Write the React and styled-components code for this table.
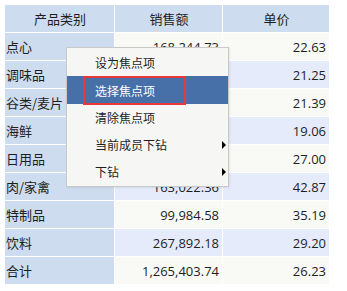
import React from "react";
import styled, { createGlobalStyle } from "styled-components";

const GlobalStyle = createGlobalStyle`
  body {
    margin: 0;
    background: #fff;
    font-family: "Segoe UI", "Noto Sans", "Noto Sans CJK SC", sans-serif;
  }
`;

const Page = styled.div`
  position: relative;
  padding: 5px;
`;

const Grid = styled.div`
  display: grid;
  grid-template-columns: 109px 107px 106px;
  grid-auto-rows: 27px;
  gap: 1px;
  width: max-content;
  background: #fff;
  color: #1e1e1e;
  font-size: 13px;
`;

const Cell = styled.div`
  display: flex;
  align-items: center;
  justify-content: ${p => (p.$head ? "center" : p.$num ? "flex-end" : "flex-start")};
  padding: ${p => (p.$num ? "0 3px 0 0" : "0 0 0 1px")};
  background: ${p =>
    p.$head || p.$label ? "#cddcef" : p.$alt ? "#e6ebfc" : "#f9f9f5"};
  font-family: ${p =>
    p.$num
      ? '"Segoe UI", "Open Sans", "Noto Sans", sans-serif'
      : '"Microsoft YaHei", "Noto Sans CJK SC", sans-serif'};
  white-space: nowrap;
`;

const Menu = styled.div`
  position: absolute;
  left: 66px;
  top: 47px;
  width: 161px;
  padding: 1px 0;
  background: #f6f6f4;
  border: 1px solid #c9c9c9;
  box-shadow: 1px 1px 2px rgba(0, 0, 0, 0.08);
  font-family: "Microsoft YaHei", "Noto Sans CJK SC", sans-serif;
  font-size: 12px;
`;

const MenuItem = styled.div`
  position: relative;
  display: flex;
  align-items: center;
  height: ${p => (p.$active ? 28 : 27)}px;
  padding-left: 28px;
  color: ${p => (p.$active ? "#fff" : "#1e1e1e")};
  background: ${p => (p.$active ? "#4870a8" : "transparent")};
`;

const Arrow = styled.span`
  position: absolute;
  right: 2px;
  top: 50%;
  margin-top: -4px;
  width: 0;
  height: 0;
  border-top: 4px solid transparent;
  border-bottom: 4px solid transparent;
  border-left: 4px solid #000;
`;

const Highlight = styled.div`
  position: absolute;
  left: 16px;
  top: 0;
  width: 103px;
  height: 29px;
  box-sizing: border-box;
  border: 2px solid #e8383b;
`;

const rows = [
  ["点心", "168,244.73", "22.63"],
  ["调味品", "106,047.08", "21.25"],
  ["谷类/麦片", "95,744.59", "21.39"],
  ["海鲜", "131,261.74", "19.06"],
  ["日用品", "234,507.28", "27.00"],
  ["肉/家禽", "163,022.36", "42.87"],
  ["特制品", "99,984.58", "35.19"],
  ["饮料", "267,892.18", "29.20"],
  ["合计", "1,265,403.74", "26.23"]
];

const menuItems = [
  { label: "设为焦点项" },
  { label: "选择焦点项", active: true },
  { label: "清除焦点项" },
  { label: "当前成员下钻", sub: true },
  { label: "下钻", sub: true }
];

export default function App() {
  return (
    <Page>
      <GlobalStyle />
      <Grid>
        <Cell $head>产品类别</Cell>
        <Cell $head>销售额</Cell>
        <Cell $head>单价</Cell>
        {rows.map((r, i) => (
          <React.Fragment key={r[0]}>
            <Cell $label>{r[0]}</Cell>
            <Cell $num $alt={i % 2 === 1}>{r[1]}</Cell>
            <Cell $num $alt={i % 2 === 1}>{r[2]}</Cell>
          </React.Fragment>
        ))}
      </Grid>
      <Menu>
        {menuItems.map(item => (
          <MenuItem key={item.label} $active={item.active}>
            {item.label}
            {item.sub && <Arrow />}
            {item.active && <Highlight />}
          </MenuItem>
        ))}
      </Menu>
    </Page>
  );
}
